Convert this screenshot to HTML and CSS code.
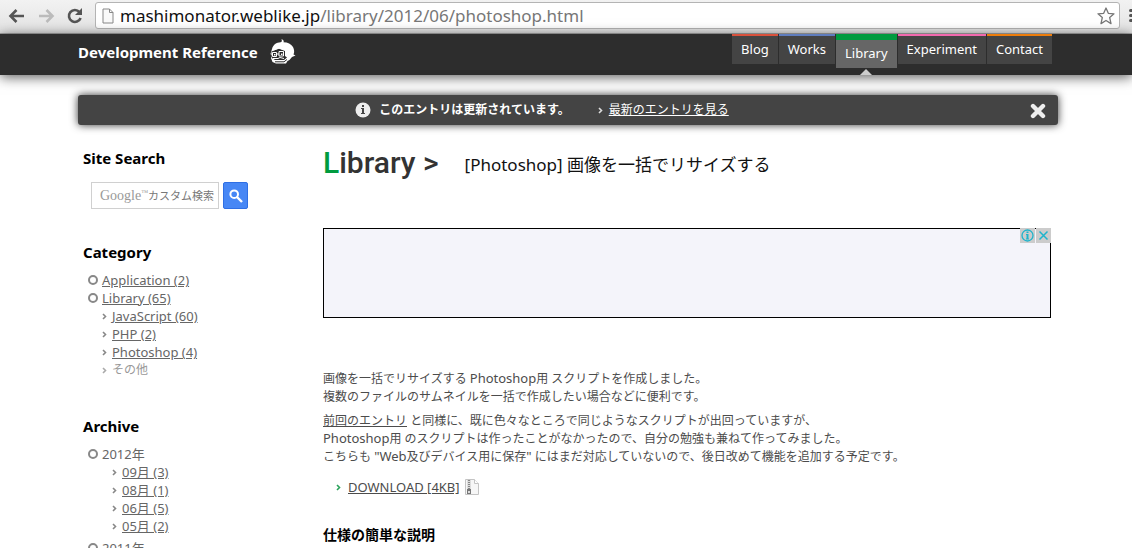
FILE: index.html
```html
<!DOCTYPE html>
<html lang="ja">
<head>
<meta charset="utf-8">
<title>[Photoshop] 画像を一括でリサイズする</title>
<link rel="stylesheet" href="styles.css">
</head>
<body>
<div class="browser">
  <button class="tool" aria-label="Back"><svg width="18" height="16" viewBox="0 0 18 16"><path d="M16 8H3M8.500 2 2.500 8l6 6" fill="none" stroke="#555" stroke-width="2.600"/></svg></button>
  <button class="tool" aria-label="Forward"><svg width="18" height="16" viewBox="0 0 18 16"><path d="M2 8h13M9.500 2l6 6-6 6" fill="none" stroke="#bbb" stroke-width="2.600"/></svg></button>
  <button class="tool" aria-label="Reload"><svg width="18" height="16" viewBox="0 0 18 16"><path d="M13.500 4A6 6 0 1 0 14.600 10" fill="none" stroke="#555" stroke-width="2.600"/><path d="M16 0v7H9z" fill="#555"/></svg></button>
  <div class="address">
    <svg width="12" height="16" viewBox="0 0 12 16"><path d="M1 1h6.500L11 4.500V15H1zM7.500 1v3.500H11" fill="#fafafa" stroke="#888"/></svg>
    <span class="url">mashimonator.weblike.jp<span class="path">/library/2012/06/photoshop.html</span></span>
    <button class="star" aria-label="Bookmark"><svg width="18" height="18" viewBox="0 0 18 18"><path d="M9 1l2.300 5.300 5.700.5-4.300 3.800 1.300 6L9 13.500 4 16.600l1.300-6L1 6.800l5.700-.5z" fill="none" stroke="#777" stroke-width="1.300" stroke-linejoin="round"/></svg></button>
  </div>
  <button class="menu" aria-label="Menu"><i></i><i></i><i></i></button>
</div>

<header class="header">
  <div class="header-inner">
    <a class="brand" href="#">Development Reference
      <svg class="mascot" width="26" height="26" viewBox="0 0 26 26"><path d="M2 10C3 5.500 6.500 3.500 10.500 3.200Q12.500 3 11.500 0Q14.500 1.500 13.500 3.300Q20 3.500 23 8Q25 12 23.500 15.500L25.500 16.500L22 18Q20 21 17.500 22L16 24.500H6L2.500 23L1 19L2 17L.500 15z" fill="#fff"/><path d="M1.500 12.500L9 9.500l6 2V17l2 1.500-3 2.500H5l-3-2z" fill="#2d2d2d"/><path d="M2.500 13.500h4v4h-4zM9 12.500h4.500v4.500H9zM6.500 15H9M3 19.500h5l2-1 4 1M2 11.500l7-2.300 6 2.300" fill="none" stroke="#fff"/><path d="M4 15h1.500v1.500H4zM11 14.500h1.500V16H11z" fill="#fff"/><path d="M5 22.800h9l3-2.300" fill="none" stroke="#2d2d2d"/></svg>
    </a>
    <nav class="nav">
      <a class="tab red" href="#">Blog</a>
      <a class="tab blue" href="#">Works</a>
      <a class="tab current" href="#">Library</a>
      <a class="tab pink" href="#">Experiment</a>
      <a class="tab orange" href="#">Contact</a>
    </nav>
  </div>
</header>

<div class="page">
  <div class="notice">
    <svg width="16" height="16" viewBox="0 0 16 16"><circle cx="8" cy="8" r="7.500" fill="#eee"/><path d="M7 3h2v2H7zM6 6h3v5h1v1H6v-1h1V7H6z" fill="#444"/></svg>
    <strong class="notice-text">このエントリは更新されています。</strong>
    <a class="notice-link" href="#"><svg class="arrow" width="5" height="7" viewBox="0 0 5 7"><path d="M1 1l2.500 2.500L1 6"/></svg><span>最新のエントリを見る</span></a>
    <button class="close" aria-label="閉じる"><svg width="16" height="16" viewBox="0 0 16 16"><path d="M3 3l10 10M13 3L3 13" stroke="#eee" stroke-width="4.400" stroke-linecap="round"/></svg></button>
  </div>

  <div class="columns">
    <aside class="side">
      <h2 class="side-title">Site Search</h2>
      <form class="search">
        <label class="search-box"><span class="google">Google<sup>™</sup></span><input class="search-input" type="text" placeholder="カスタム検索" aria-label="カスタム検索"></label>
        <button class="search-go" type="button" aria-label="検索"><svg width="14" height="14" viewBox="0 0 14 14"><circle cx="5.200" cy="5.200" r="3.800" fill="none" stroke="#fff" stroke-width="2"/><path d="M8 8l5 5" stroke="#fff" stroke-width="2.400"/></svg></button>
      </form>

      <h2 class="side-title">Category</h2>
      <ul class="list category">
        <li class="ring"><a href="#">Application (2)</a></li>
        <li class="ring"><a href="#">Library (65)</a></li>
        <li class="sub"><svg class="arrow" width="5" height="7" viewBox="0 0 5 7"><path d="M1 1l2.500 2.500L1 6"/></svg><a href="#">JavaScript (60)</a></li>
        <li class="sub"><svg class="arrow" width="5" height="7" viewBox="0 0 5 7"><path d="M1 1l2.500 2.500L1 6"/></svg><a href="#">PHP (2)</a></li>
        <li class="sub"><svg class="arrow" width="5" height="7" viewBox="0 0 5 7"><path d="M1 1l2.500 2.500L1 6"/></svg><a href="#">Photoshop (4)</a></li>
        <li class="sub muted"><svg class="arrow" width="5" height="7" viewBox="0 0 5 7"><path d="M1 1l2.500 2.500L1 6"/></svg><span>その他</span></li>
      </ul>

      <h2 class="side-title">Archive</h2>
      <ul class="list">
        <li class="ring">2012年</li>
        <li class="sub deep"><svg class="arrow" width="5" height="7" viewBox="0 0 5 7"><path d="M1 1l2.500 2.500L1 6"/></svg><a href="#">09月 (3)</a></li>
        <li class="sub deep"><svg class="arrow" width="5" height="7" viewBox="0 0 5 7"><path d="M1 1l2.500 2.500L1 6"/></svg><a href="#">08月 (1)</a></li>
        <li class="sub deep"><svg class="arrow" width="5" height="7" viewBox="0 0 5 7"><path d="M1 1l2.500 2.500L1 6"/></svg><a href="#">06月 (5)</a></li>
        <li class="sub deep"><svg class="arrow" width="5" height="7" viewBox="0 0 5 7"><path d="M1 1l2.500 2.500L1 6"/></svg><a href="#">05月 (2)</a></li>
        <li class="ring year">2011年</li>
      </ul>
    </aside>

    <main class="main">
      <div class="heading">
        <span class="section"><span class="initial">L</span>ibrary &gt;</span>
        <h1 class="title">[Photoshop] 画像を一括でリサイズする</h1>
      </div>
      <div class="ad">
        <div class="ad-tools">
          <button class="ad-button" aria-label="Ad info"><svg width="15" height="15" viewBox="0 0 15 15"><circle cx="7.500" cy="7.500" r="5.500" fill="none" stroke="#1eb4cc" stroke-width="1.300"/><path d="M6.500 3.500h2v1.500h-2zM6 6h2.500v4.500H9v1H6v-1h.5V7H6z" fill="#1eb4cc"/></svg></button>
          <button class="ad-button" aria-label="Close ad"><svg width="15" height="15" viewBox="0 0 15 15"><path d="M3.500 3.500l8 8M11.500 3.500l-8 8" stroke="#1eb4cc" stroke-width="1.500"/></svg></button>
        </div>
      </div>
      <p class="text">画像を一括でリサイズする <span class="latin">Photoshop</span>用 スクリプトを作成しました。<br>複数のファイルのサムネイルを一括で作成したい場合などに便利です。</p>
      <p class="text"><a href="#">前回のエントリ</a> と同様に、既に色々なところで同じようなスクリプトが出回っていますが、<br><span class="latin">Photoshop</span>用 のスクリプトは作ったことがなかったので、自分の勉強も兼ねて作ってみました。<br>こちらも <span class="latin">"Web</span>及びデバイス用に保存<span class="latin">"</span> にはまだ対応していないので、後日改めて機能を追加する予定です。</p>
      <div class="download"><svg class="arrow green" width="5" height="7" viewBox="0 0 5 7"><path d="M1 1l2.500 2.500L1 6"/></svg><a href="#">DOWNLOAD [4KB]</a><svg class="zip" width="14" height="16" viewBox="0 0 14 16"><path d="M.5.500h9l4 4v11H.5z" fill="#f7f7f7" stroke="#c4c4c4"/><path d="M9.500.500v4h4" fill="#fff" stroke="#c4c4c4"/><path d="M2 1h4v9H2z" fill="#ddd"/><path d="M4 1v9" stroke="#888" stroke-width="2" stroke-dasharray="1 1"/><path d="M2 10h4v5H2z" fill="#777"/><path d="M3 12h2v2H3z" fill="#ddd"/></svg></div>
      <h2 class="subhead">仕様の簡単な説明</h2>
    </main>
  </div>
</div>
</body>
</html>
```
FILE: styles.css
```css
*, *::before, *::after { box-sizing: border-box; }
html { height: 100%; overflow: hidden; }
body { margin: 0; height: 100%; overflow: hidden; background: #fff; color: #4c4c4c; font: 12px/18px "Noto Sans", "Noto Sans CJK JP", sans-serif; }
button { padding: 0; border: 0; background: none; }
svg { display: block; flex: none; }
a { color: inherit; }

.browser { display: flex; align-items: center; height: 34px; padding: 0 0 2px 8px; background: linear-gradient(#f2f2f2, #e3e3e3); border-bottom: 1px solid #aaa; overflow: hidden; }
.tool { margin-right: 11px; }
.address { display: flex; flex: 1; align-items: center; height: 27px; margin-right: 9px; padding: 0 4px 0 6px; background: #fff; border: 1px solid #b4b4b4; border-radius: 3px; }
.url { flex: 1; margin-left: 6px; color: #111; font-size: 17px; line-height: 24px; white-space: nowrap; }
.path { color: #777; }
.menu { display: grid; flex: none; gap: 2px; width: 3px; overflow: hidden; }
.menu i { width: 16px; height: 3px; border-radius: 2px; background: #555; }

.header { position: relative; padding-left: 4px; background: #2d2d2d; box-shadow: 0 2px 12px rgba(0, 0, 0, .65); }
.header-inner { display: flex; justify-content: space-between; max-width: 980px; height: 41px; margin: 0 auto; padding-right: 6px; }
.brand { display: flex; gap: 12px; height: 36px; align-items: center; color: #fff; font-size: 15px; font-weight: bold; text-decoration: none; }
.nav { display: flex; align-items: flex-start; gap: 1px; }
.tab { height: 30px; padding: 3px 9px; border-top: 2px solid; background: #444; font-size: 13px; line-height: 20px; color: #fff; text-decoration: none; }
.red { border-color: #d9513c; }
.blue { border-color: #5f7dbe; }
.pink { border-color: #f268ae; }
.orange { border-color: #ee7d0b; }
.current { position: relative; height: 34px; border-top: 6px solid #009b3f; background: #666; }
.current::after { content: ""; position: absolute; left: 50%; top: 29px; margin-left: -6px; border: 6px solid transparent; border-top: 0; border-bottom-color: #ccc; }

.page { padding-left: 4px; }
.notice { position: relative; display: flex; align-items: center; justify-content: center; max-width: 980px; height: 30px; margin: 20px auto 0; padding-right: 52px; border-radius: 3px; background: #444; color: #fff; box-shadow: 0 0 8px rgba(0, 0, 0, .8); }
.notice-text { margin-left: 8px; }
.notice-link { display: flex; align-items: center; gap: 6px; margin-left: 28px; text-decoration: none; }
.notice-link span { text-decoration: underline; }
.close { position: absolute; right: 12px; top: 8px; }

.arrow { fill: none; stroke: #888; stroke-width: 1.6; }
.notice .arrow { stroke: #ddd; }
.arrow.green { stroke: #2aa35b; }

.columns { display: flex; max-width: 980px; margin: 0 auto; padding: 22px 7px 0 5px; }
.side { flex: none; width: 240px; }
.side-title { margin: 0; color: #000; font-size: 15px; line-height: 22px; font-weight: bold; }
.search { display: flex; gap: 4px; margin: 13px 0 32px 8px; }
.search-box { display: flex; align-items: center; width: 128px; height: 27px; padding-left: 8px; border: 1px solid #d0d0d0; color: #999; }
.google { font: 14px/20px "Liberation Serif", serif; }
.google sup { font-size: 7px; line-height: 7px; vertical-align: 5px; }
.search-input { flex: 1; min-width: 0; padding: 0; border: 0; outline: 0; background: none; font: 11px/18px "Noto Sans", "Noto Sans CJK JP", sans-serif; }
.search-input::placeholder { color: #777; opacity: 1; }
.search-go { display: grid; place-items: center; width: 25px; height: 27px; border: 1px solid #2f6fe4; border-radius: 2px; background: #4787f5; }

.list { margin: 8px 0 0; padding: 0 0 0 5px; list-style: none; color: #666; font-size: 13px; }
.category { margin-bottom: 36px; }
.list li { display: flex; align-items: center; height: 18px; }
.ring::before { content: ""; width: 10px; height: 10px; margin-right: 4px; border: 2px solid #888; border-radius: 50%; }
.list .sub { gap: 5px; padding-left: 14px; }
.list .deep { padding-left: 24px; }
.list .muted { color: #999; font-size: 12px; }
.muted .arrow { stroke: #aaa; }
.list .year { margin-top: 4px; }

.main { flex: 1; min-width: 0; }
.heading { display: flex; align-items: center; gap: 26px; height: 36px; }
.section { align-self: flex-start; color: #333; font: 500 30px/32px Roboto, sans-serif; }
.initial { color: #009b3f; }
.title { margin: 0; color: #111; font-size: 17px; line-height: 24px; font-weight: normal; }
.ad { position: relative; height: 90px; margin: 45px 0 52px; border: 1px solid #000; background: #f4f4fa; }
.ad-tools { position: absolute; top: -1px; right: -1px; display: flex; gap: 1px; }
.ad-button { background: #ccc; }
.text { margin: 0 0 6px; }
.latin { font-size: 13px; line-height: 12px; }
.download { display: flex; align-items: center; gap: 7px; margin: 12px 0 0 13px; font-size: 13px; }
.zip { margin-left: -2px; }
.subhead { margin: 28px 0 0; color: #000; font-size: 14px; line-height: 22px; }
```
